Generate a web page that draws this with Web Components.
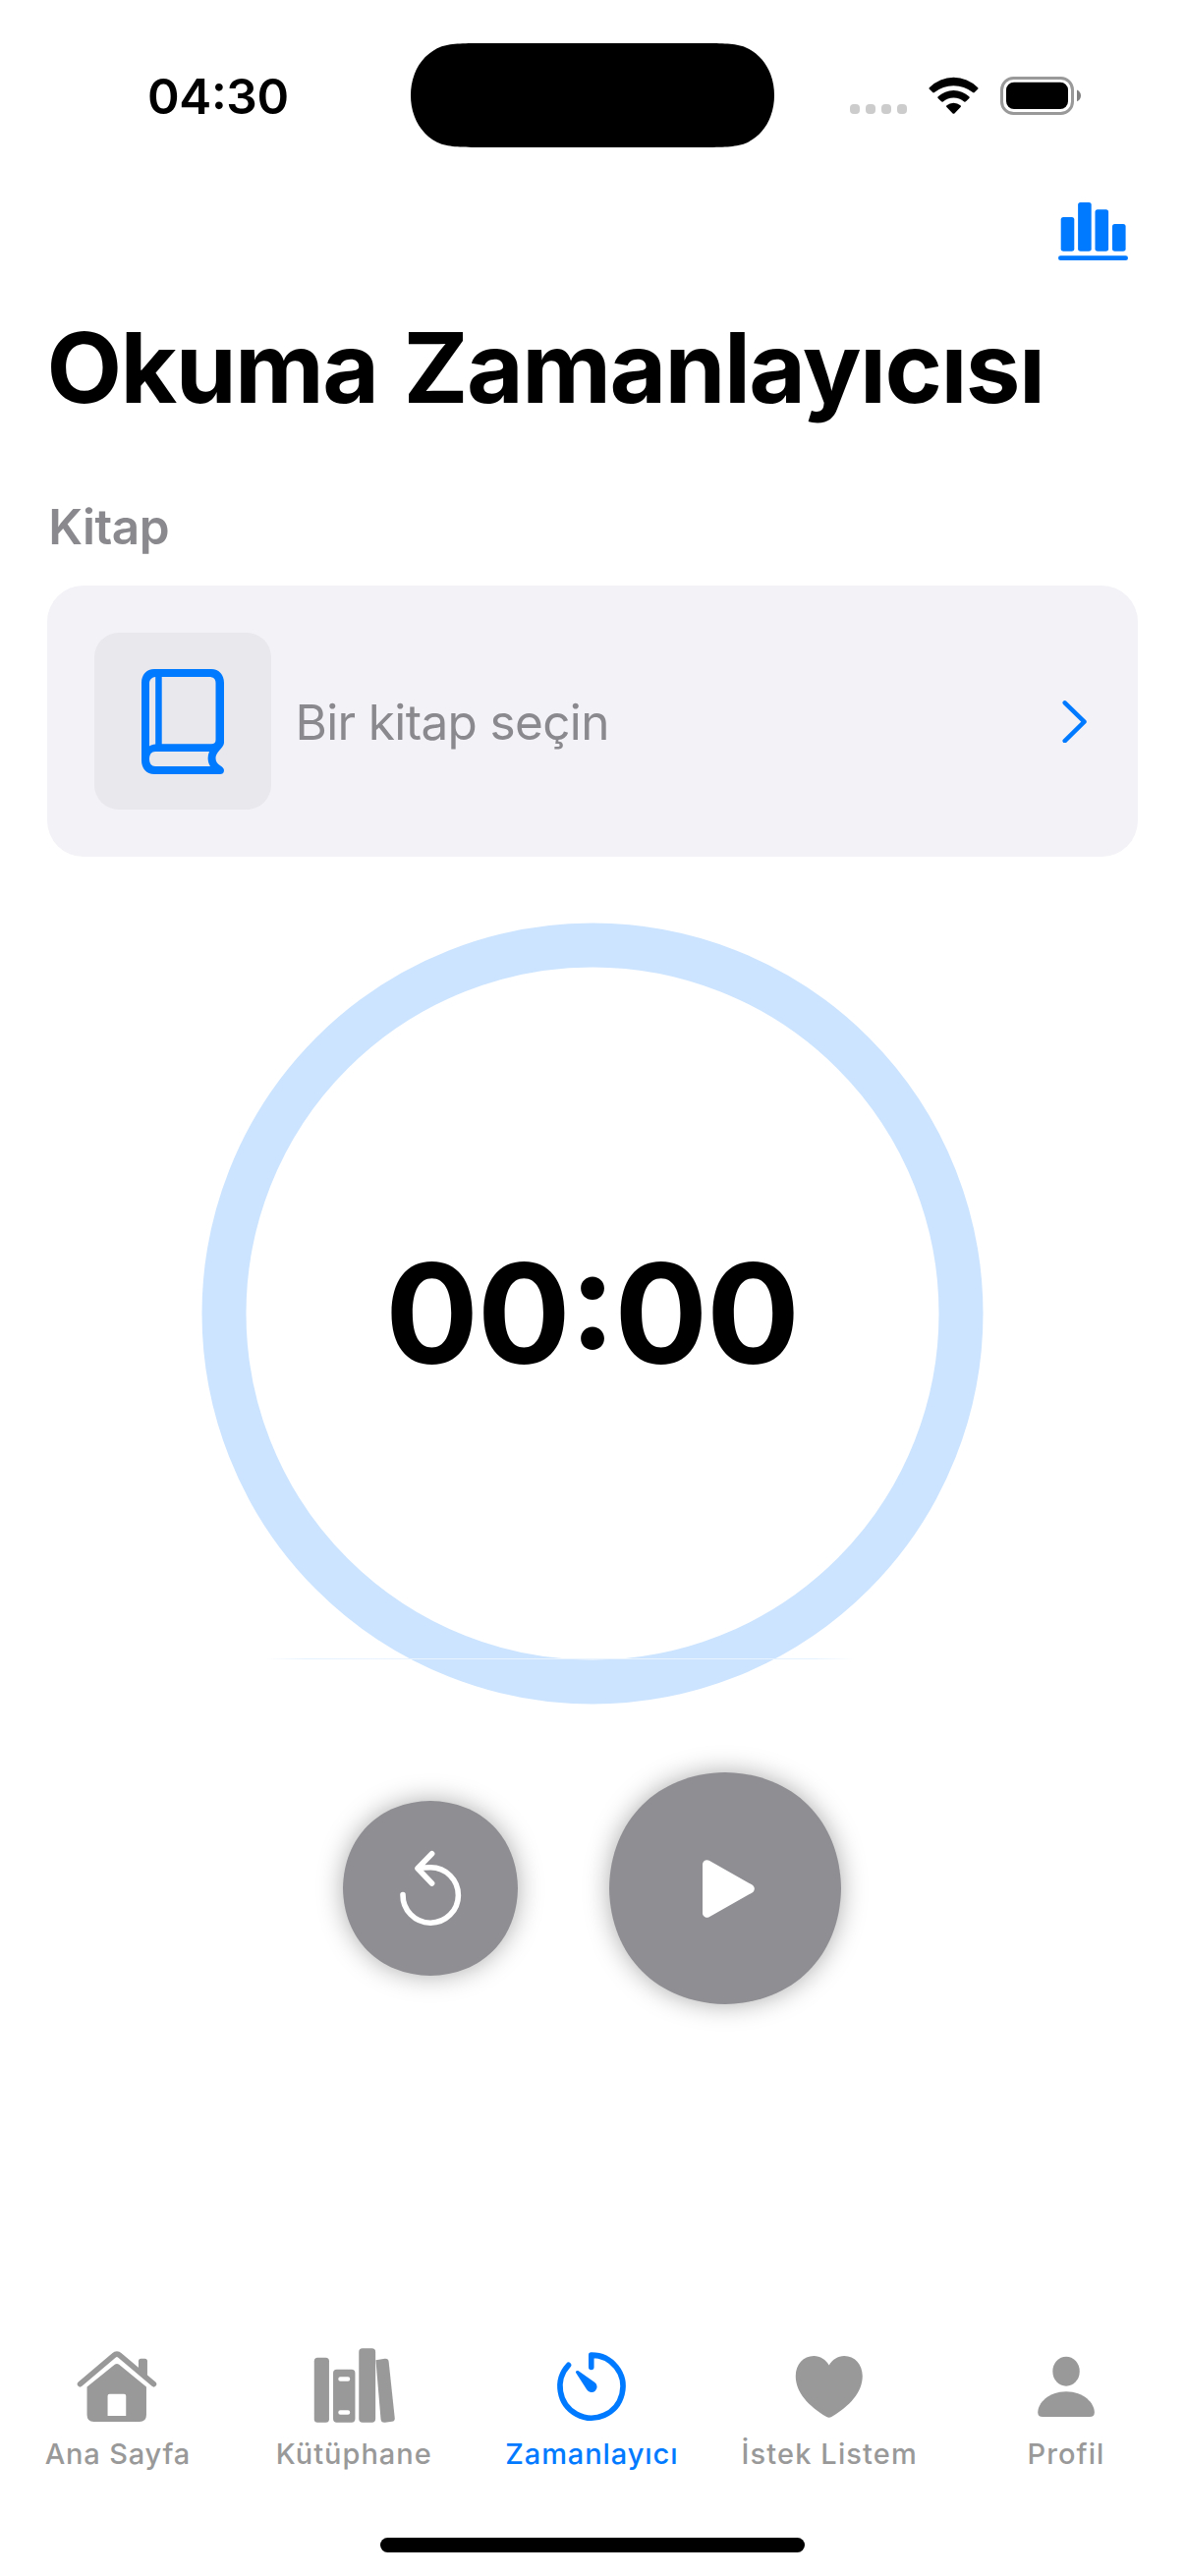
<!DOCTYPE html>
<html lang="tr">
<head>
<meta charset="utf-8">
<title>Okuma Zamanlayıcısı</title>
<style>
  html, body { margin: 0; padding: 0; }
  body {
    width: 1206px; height: 2622px; overflow: hidden; background: #fff; color: #000;
    font-family: Inter, "Noto Sans", sans-serif;
    --blue: #007aff; --gray: #8a8a8e;
  }
</style>
</head>
<body>
<timer-screen></timer-screen>
<script>
const define = (name, html, setup) => customElements.define(name, class extends HTMLElement {
  connectedCallback() {
    if (this.shadowRoot) return;
    const template = document.createElement('template');
    template.innerHTML = html;
    this.attachShadow({ mode: 'open' }).append(template.content.cloneNode(true));
    if (setup) setup.call(this, this.shadowRoot);
  }
});

/* A single line of text tracked so that its ink fills the given span. */
define('fit-text', `
  <style>
    :host { display: block; white-space: nowrap; flex: none; }
    :host([digits]) { font-feature-settings: "case" 1; }
    span { display: inline-block; font-kerning: normal; }
  </style>
  <span><slot></slot></span>`,
  function (root) {
    const text = this.textContent;
    const size = +this.getAttribute('size'), weight = this.getAttribute('weight');
    const span = +this.getAttribute('span'), gap = +this.getAttribute('gap') || 0;
    const ctx = document.createElement('canvas').getContext('2d');
    ctx.font = `${weight} ${size}px Inter, "Noto Sans", sans-serif`;
    const m = ctx.measureText(text);
    const ink = m.actualBoundingBoxLeft + m.actualBoundingBoxRight;
    const spaces = text.split(' ').length - 1;
    const line = root.querySelector('span');
    line.style.letterSpacing = (span - ink - gap * spaces) / (text.length - 1) + 'px';
    line.style.wordSpacing = gap + 'px';
    line.style.marginLeft = m.actualBoundingBoxLeft + 'px';
    this.style.cssText = `font-size:${size}px;font-weight:${weight};width:${span}px;` +
      `height:${this.getAttribute('line')}px;line-height:${this.getAttribute('line')}px`;
  });

define('status-bar', `
  <style>
    :host { display: flex; height: 196px; align-items: center; flex: none; }
    .time { margin-left: 152px; }
    .island { margin: -2px 0 0 125.5px; display: block; }
    .signs { display: block; margin-left: 77px; }
  </style>
  <fit-text class="time" digits size="49.5" weight="600" span="140.5" line="60">04:30</fit-text>
  <svg class="island" width="370" height="106" viewBox="0 0 370 106">
    <path d="M78 0H292C316 0 327 0 338.5 3.2C351.4 8 361.5 18.6 366.2 31.5C369 39 370 46 370 53C370 60 369 67 366.2 74.5C361.5 87.4 351.4 98 338.5 102.8C327 106 316 106 292 106H78C54 106 43 106 31.5 102.8C18.6 98 8.5 87.4 3.8 74.5C1 67 0 60 0 53C0 46 1 39 3.8 31.5C8.5 18.6 18.6 8 31.5 3.2C43 0 54 0 78 0Z"/>
  </svg>
  <svg class="signs" width="236" height="40" viewBox="865 78 236 40">
    <g fill="#ccc">
      <rect x="865" y="106" width="10" height="10" rx="4"/><rect x="881" y="106" width="10" height="10" rx="4"/>
      <rect x="897" y="106" width="10" height="10" rx="4"/><rect x="913" y="106" width="10" height="10" rx="4"/>
    </g>
    <g transform="translate(945 79)">
      <path d="M1 10A34.5 34.5 0 0 1 50 10Q51 10.9 50.1 11.8L46.8 15.1Q46 15.9 45 15.1A31 31 0 0 0 6 15.1Q5 15.9 4.2 15.1L.9 11.8Q0 10.9 1 10Z"/>
      <path d="M9.7 19.2A23.4 23.4 0 0 1 41.3 19.2Q42.2 20.1 41.4 21L38 24.3Q37.1 25.1 36.2 24.4A16.8 16.8 0 0 0 14.8 24.4Q13.9 25.1 13 24.3L9.6 21Q8.8 20.1 9.7 19.2Z"/>
      <path d="M18.5 28.3A11 11 0 0 1 32.5 28.3Q33.5 29.2 32.6 30.1L26.4 36.4Q25.5 37.3 24.6 36.4L18.4 30.1Q17.5 29.2 18.5 28.3Z"/>
    </g>
    <rect x="1019.5" y="79.5" width="72" height="36" rx="12" fill="none" stroke="#999" stroke-width="3"/>
    <rect x="1024" y="83.7" width="63" height="27.3" rx="8"/>
    <path d="M1096 91.5C1098.6 92.6 1100 95 1100 97.4S1098.6 102.2 1096 103.3Z" fill="#808080"/>
  </svg>`);

define('nav-header', `
  <style>
    :host { display: flex; flex-direction: column; flex: none; color: #000; }
    .tools { display: flex; justify-content: flex-end; height: 118px; padding: 10px 58px 0 0; box-sizing: border-box; }
    .title { margin-left: 51.5px; }
  </style>
  <div class="tools">
    <svg width="71" height="59" viewBox="1077 206 71 59" fill="#007aff">
      <rect x="1079.7" y="221" width="13.6" height="34.7" rx="2.5"/>
      <rect x="1097.1" y="206" width="13.6" height="49.7" rx="2.5"/>
      <rect x="1114.5" y="213.3" width="13.6" height="42.4" rx="2.5"/>
      <rect x="1132" y="228" width="13.6" height="27.7" rx="2.5"/>
      <rect x="1077" y="260.3" width="71" height="4.7" rx="2.35"/>
    </svg>
  </div>
  <fit-text class="title" size="99.5" weight="700" span="1006.5" gap="4" line="120">Okuma Zamanlayıcısı</fit-text>`);

define('book-picker', `
  <style>
    :host { display: flex; flex-direction: column; padding: 72px 48px 0; flex: none; color: var(--gray); }
    .label { margin: 0 0 30px 4.2px; }
    .card { display: flex; align-items: center; height: 276px; box-sizing: border-box; padding: 0 51px 0 48px; background: #f2f2f7; border-radius: 37px; }
    .thumb { display: flex; align-items: center; justify-content: center; width: 180px; height: 180px; border-radius: 25px; background: #e8e8ed; }
    .name { margin: 2px 0 0 28.5px; }
    .more { margin-left: auto; }
  </style>
  <fit-text class="label" size="49.5" weight="600" span="118.6" line="60">Kitap</fit-text>
  <div class="card">
    <div class="thumb">
      <svg width="84" height="107" viewBox="0 0 84 107">
        <path fill="#007aff" fill-rule="evenodd" d="M13 0H71C79 0 84 6 84 14V75C84 80 75.5 84 75.5 91C75.5 98 84 98.5 84 103C84 106 82 107 80 107H13C5 107 0 101 0 93V14C0 6 5 0 13 0ZM20.7 8H69C73 8 75.5 10 75.5 14V72C75.5 75 74 76.3 71 76.3H20.7ZM14.2 8V76.5C11.5 76.5 9.5 77.5 8 78.5V15C8 11 10 8.5 14.2 8ZM14 84H69C67 89 67 94 70 99H14C10 99 8 96 8 91.5C8 87 10 84 14 84Z"/>
      </svg>
    </div>
    <fit-text class="name" size="49.5" weight="400" span="312.7" line="60">Bir kitap seçin</fit-text>
    <svg class="more" width="26" height="44" viewBox="1081.5 711.5 26 44" fill="none" stroke="#007aff" stroke-width="4.5" stroke-linecap="round" stroke-linejoin="round">
      <path d="M1084.2 714.8L1104 734.2L1084.2 753.6"/>
    </svg>
  </div>`);

define('timer-dial', `
  <style>
    :host { display: grid; place-items: center; align-self: center; flex: none; position: relative;
            width: 796px; height: 796px; margin-top: 67px; color: #000; }
    svg, fit-text { grid-area: 1 / 1; }
    i { position: absolute; left: 65px; top: 749px; width: 600px; height: 1px;
        background: linear-gradient(90deg, rgba(229,242,255,0), #e5f2ff 7%, #eaf4ff 25%, #eaf4ff 75%, #e5f2ff 93%, rgba(229,242,255,0)); }
  </style>
  <svg width="796" height="796" viewBox="0 0 796 796"><circle cx="398" cy="398" r="375" fill="none" stroke="#cce4ff" stroke-width="45"/></svg>
  <fit-text digits size="141" weight="700" span="409.8" line="170">00:00</fit-text>
  <i></i>`);

define('round-button', `
  <style>
    :host { display: block; flex: none; }
    svg { display: block; width: 100%; height: 100%; overflow: visible; }
    .disc { fill: #8e8e93; filter: drop-shadow(0 0 13px rgba(0,0,0,.33)); }
  </style>
  <svg><path class="disc"/><g></g></svg>`,
  function (root) {
    const s = +this.getAttribute('size'), h = s / 2, a = .207 * s, b = .0045 * s;
    this.style.width = this.style.height = s + 'px';
    root.querySelector('svg').setAttribute('viewBox', `0 0 ${s} ${s}`);
    root.querySelector('.disc').setAttribute('d',
      `M${h} 0C${s - a} ${b} ${s - b} ${a} ${s} ${h}C${s - b} ${s - a} ${s - a} ${s - b} ${h} ${s}` +
      `C${a} ${s - b} ${b} ${s - a} 0 ${h}C${b} ${a} ${a} ${b} ${h} 0Z`);
    root.querySelector('g').innerHTML = {
      reset: '<path d="M61 95.500A28.200 28.200 0 1 0 89.200 67.800C84.500 67.800 80 68.200 76.500 68.700M90.600 53.700L76 68.700L90.600 84" fill="none" stroke="#fff" stroke-width="5.600" stroke-linecap="round" stroke-linejoin="round"/>',
      play: '<path d="M99.500 93.700L143.300 118.500L99.500 143.300Z" fill="#fff" stroke="#fff" stroke-width="9" stroke-linejoin="round"/>'
    }[this.getAttribute('icon')];
  });

define('timer-controls', `
  <style>:host { display: flex; align-items: center; gap: 93px; margin: 69px 0 0 349px; flex: none; }</style>
  <round-button size="178" icon="reset"></round-button>
  <round-button size="236" icon="play"></round-button>`);

const tabIcons = {
  home: `<g transform="translate(.25 2)"><path d="M3.3 34.7L37.5 5.6Q40.7 2.7 43.9 5.6L78.2 34.7" fill="none" stroke="currentColor" stroke-width="5.6" stroke-linecap="round" stroke-linejoin="round"/>
    <path d="M62.7 22V11.2Q62.7 8.7 65.2 8.7H69.2Q71.7 8.7 71.7 11.2V28.5Z"/>
    <path fill-rule="evenodd" d="M10.3 37.5L38.5 14.8Q40.7 13 42.9 14.8L70.7 37.5V66Q70.7 73 63.7 73H17.3Q10.3 73 10.3 66ZM33.3 44.7Q31.3 44.7 31.3 46.7V67H50V46.7Q50 44.7 48 44.7Z"/></g>`,
  books: `<g transform="translate(.75 0)"><rect y="9.7" width="15.2" height="66" rx="3.5"/>
    <path fill-rule="evenodd" d="M23 21.7H38Q41.7 21.7 41.7 25.4V72Q41.7 75.7 38 75.7H23Q19.3 75.7 19.3 72V25.4Q19.3 21.7 23 21.7ZM26.7 29.3A2.2 2.2 0 0 0 26.7 33.7H34.3A2.2 2.2 0 0 0 34.3 29.3ZM26.7 63.3A2.2 2.2 0 0 0 26.7 67.7H34.3A2.2 2.2 0 0 0 34.3 63.3Z"/>
    <rect x="45.5" y=".3" width="16.9" height="75.4" rx="3.7"/>
    <path d="M62.7 12.3L72 10.7Q75.5 10.4 75.9 14L82 71.3Q82.2 74.4 79.2 74.8L72 75.7Q68.2 76 67.8 72.5Z"/></g>`,
  timer: `<g transform="translate(6.25 4)"><path d="M34.5 15.5V3.1A32 32 0 1 1 11.3 13.3" fill="none" stroke="currentColor" stroke-width="5.6" stroke-linecap="round" stroke-linejoin="round"/>
    <path d="M18.8 21C18.3 19.3 20 18.5 21.5 19.3L37.8 30.7A5.6 5.6 0 1 1 29.9 38.2Z"/></g>`,
  heart: `<path transform="translate(7.75 8)" d="M34 9.5C31 4 25 0 18.5 0C8 0 0 8.5 0 20.5C0 37 13 51 31.5 62Q34 63.5 36.5 62C55 51 68 37 68 20.5C68 8.5 60 0 49.5 0C43 0 37 4 34 9.5Z"/>`,
  person: `<g transform="translate(12.25 8)"><ellipse cx="28.8" cy="15.7" rx="13.7" ry="15"/>
    <path d="M5 62C1.5 62 0 60.5 0 57.5C0 48 11 36.3 28.8 36.3C46.6 36.3 57.6 48 57.6 57.5C57.6 60.5 56 62 52.6 62Z"/></g>`
};

define('tab-item', `
  <style>
    :host { display: flex; flex-direction: column; align-items: center; width: 241.5px; flex: none; color: #999; }
    :host([active]) { color: var(--blue); }
    svg { display: block; fill: currentColor; margin-bottom: 11.5px; overflow: visible; }
  </style>
  <svg width="82" height="76" viewBox="0 0 82 76"></svg>
  <slot></slot>`,
  function (root) { root.querySelector('svg').innerHTML = tabIcons[this.getAttribute('icon')]; });

define('tab-bar', `
  <style>:host { display: flex; margin: auto 0 0 -2px; height: 193px; flex: none; }</style>
  <tab-item icon="home"><fit-text size="29" weight="450" span="146" line="40">Ana Sayfa</fit-text></tab-item>
  <tab-item icon="books"><fit-text size="29" weight="450" span="155" line="40">Kütüphane</fit-text></tab-item>
  <tab-item icon="timer" active><fit-text size="29" weight="450" span="173" line="40">Zamanlayıcı</fit-text></tab-item>
  <tab-item icon="heart"><fit-text size="29" weight="450" span="175.3" line="40">İstek Listem</fit-text></tab-item>
  <tab-item icon="person"><fit-text size="29" weight="450" span="74.6" line="40">Profil</fit-text></tab-item>`);

define('timer-screen', `
  <style>
    :host { display: flex; flex-direction: column; width: 1206px; height: 2622px; background: #fff; }
    .home-indicator { flex: none; width: 432px; height: 15px; border-radius: 7.5px; background: #000; align-self: center; margin-bottom: 24px; }
  </style>
  <status-bar></status-bar>
  <nav-header></nav-header>
  <book-picker></book-picker>
  <timer-dial></timer-dial>
  <timer-controls></timer-controls>
  <tab-bar></tab-bar>
  <div class="home-indicator"></div>`);
</script>
</body>
</html>
